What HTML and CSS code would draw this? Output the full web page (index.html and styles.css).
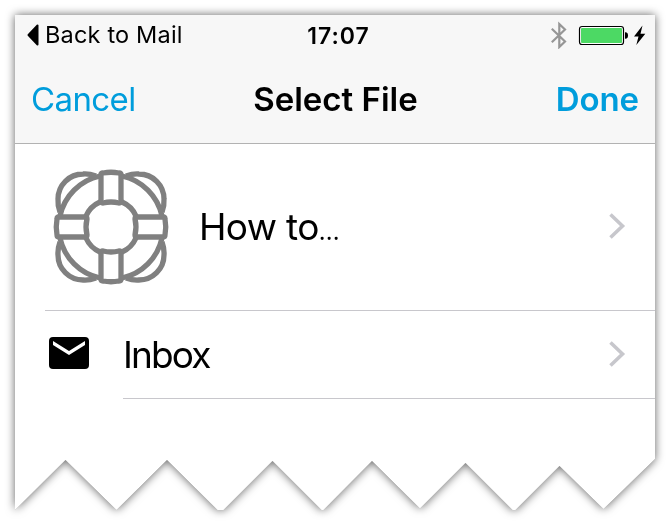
FILE: index.html
```html
<!DOCTYPE html>
<html lang="en">
<head>
<meta charset="utf-8">
<title>Select File</title>
<link rel="stylesheet" href="styles.css">
</head>
<body>
<div class="shadow">
<main class="sheet">
  <header class="top">
    <div class="status">
      <div class="back">
        <svg width="12" height="22" viewBox="0 0 12 22"><path d="M10.5 1.5V20.5L1.500 11Z" fill="#000" stroke="#000" stroke-width="2" stroke-linejoin="round"/></svg>
        <span>Back to Mail</span>
      </div>
      <time class="clock">17:07</time>
      <div class="indicators">
        <svg width="96" height="28" viewBox="0 0 96 28">
          <path d="M1.8 7.700L15 20.500L9.300 26V3L15 8.500L1.8 21.300" fill="none" stroke="#969696" stroke-width="2.200"/>
          <rect x="29.5" y="5.500" width="44" height="18" rx="2.5" fill="#fff" stroke="#000" stroke-width="1.2"/>
          <rect x="31" y="7" width="41" height="15" rx="1" fill="#4cd964"/>
          <path d="M75 11.200Q78 11 78 14.5T75 17.8Z" fill="#000"/>
          <path d="M92.5 4.500L84 15.500H88.500L86.300 24L95.300 12.700H90.500Z" fill="#000"/>
        </svg>
      </div>
    </div>
    <nav class="nav">
      <a class="cancel">Cancel</a>
      <h1 class="title">Select File</h1>
      <a class="done">Done</a>
    </nav>
  </header>
  <section class="row howto">
    <svg class="buoy" width="120" height="120" viewBox="-60 -60 120 120" fill="none" stroke="#808080" stroke-width="5.300">
      <defs>
        <g id="quarter">
          <path d="M-51-15Q-53.500-22-53-28A25 25 0 0 1-28-53Q-22-53.500-15-51"/>
          <path d="M-51-11A52.200 52.200 0 0 1-11-51M-25-11A27.300 27.300 0 0 1-11-25"/>
          <path d="M-10-52V-26Q-10-24-8-24Q0-26 8-24Q10-24 10-26V-52Q10-54 8-54Q0-55.500-8-54Q-10-54-10-52Z"/>
        </g>
      </defs>
      <use href="#quarter"/>
      <use href="#quarter" transform="rotate(90)"/>
      <use href="#quarter" transform="rotate(180)"/>
      <use href="#quarter" transform="rotate(270)"/>
    </svg>
    <span class="label">How to<span class="dots">...</span></span>
    <svg class="chevron" width="18" height="28" viewBox="0 0 18 28"><path d="M1.500 1.500L13.500 13L1.500 24.500" fill="none" stroke="#c7c7cc" stroke-width="3.600"/></svg>
  </section>
  <section class="row inbox">
    <svg class="mail" width="40" height="32" viewBox="0 0 40 32"><rect width="40" height="32" rx="4" fill="#000"/><path d="M4 4L20 14L36 4V8L20 18L4 8Z" fill="#fff"/></svg>
    <div class="cell">
      <span class="label">Inbox</span>
      <svg class="chevron" width="18" height="28" viewBox="0 0 18 28"><path d="M1.500 1.500L13.500 13L1.500 24.500" fill="none" stroke="#c7c7cc" stroke-width="3.600"/></svg>
    </div>
  </section>
</main>
</div>
</body>
</html>
```
FILE: styles.css
```css
* { box-sizing: border-box; }
body {
  margin: 0;
  height: 525px;
  overflow: hidden;
  background: #fff;
  color: #000;
  font-family: Inter, "Liberation Sans", sans-serif;
}
svg { display: block; flex: none; }
.shadow {
  padding: 15px;
  filter: drop-shadow(0 0 .5px rgba(0,0,0,.35)) drop-shadow(0 0 5px rgba(0,0,0,.62));
}
.sheet {
  width: 640px;
  height: 495px;
  background: #fff;
  clip-path: polygon(0 0, 640px 0, 640px 444px, 588.5px 494px, 544.5px 451px, 500.5px 495px, 497.5px 495px, 450.5px 448px, 405px 493.5px, 357px 446px, 308.5px 495px, 306.5px 495px, 257.5px 446px, 208.5px 495px, 202.5px 495px, 152px 445px, 101.5px 495px, 50.5px 445px, 0 495px);
}
.top {
  height: 129px;
  background: #f7f7f7;
  border-bottom: 1px solid #b2b2b2;
}
.status {
  display: grid;
  grid-template-columns: 1fr auto 1fr;
  align-items: center;
  height: 40px;
  padding: 0 9px 0 12px;
}
.back {
  display: flex;
  align-items: center;
  gap: 6px;
  font-size: 23.5px;
  letter-spacing: .18px;
  white-space: nowrap;
}
.back span { padding-bottom: 2px; }
.clock { font-size: 23px; font-weight: 600; letter-spacing: 1px; padding: 1px 0 0 4px; }
.indicators { justify-self: end; }
.nav {
  display: grid;
  grid-template-columns: 1fr auto 1fr;
  align-items: center;
  height: 88px;
  padding: 0 16px 0 16px;
  font-size: 33px;
}
.cancel, .done { color: #009ddc; }
.cancel { letter-spacing: -.6px; }
.title { margin: 0; padding-left: 1px; font-size: 33px; font-weight: 600; }
.done { justify-self: end; font-weight: 600; letter-spacing: -.1px; }
.row { display: flex; align-items: center; }
.howto {
  height: 167px;
  margin-left: 30px;
  padding: 0 28px 0 6px;
  border-bottom: 1px solid #c8c7cc;
}
.label { flex: 1; padding-bottom: 2px; font-size: 37px; white-space: nowrap; }
.howto .label { margin-left: 28px; letter-spacing: -.65px; }
.dots { font-family: "Open Sans", sans-serif; font-size: 26px; letter-spacing: .2px; }
.inbox .label { padding-bottom: 1px; letter-spacing: -1.9px; }
.mail { margin: -5px 34px 0; }
.cell {
  flex: 1;
  display: flex;
  align-items: center;
  height: 88px;
  padding-right: 28px;
  border-bottom: 1px solid #c8c7cc;
}
```
